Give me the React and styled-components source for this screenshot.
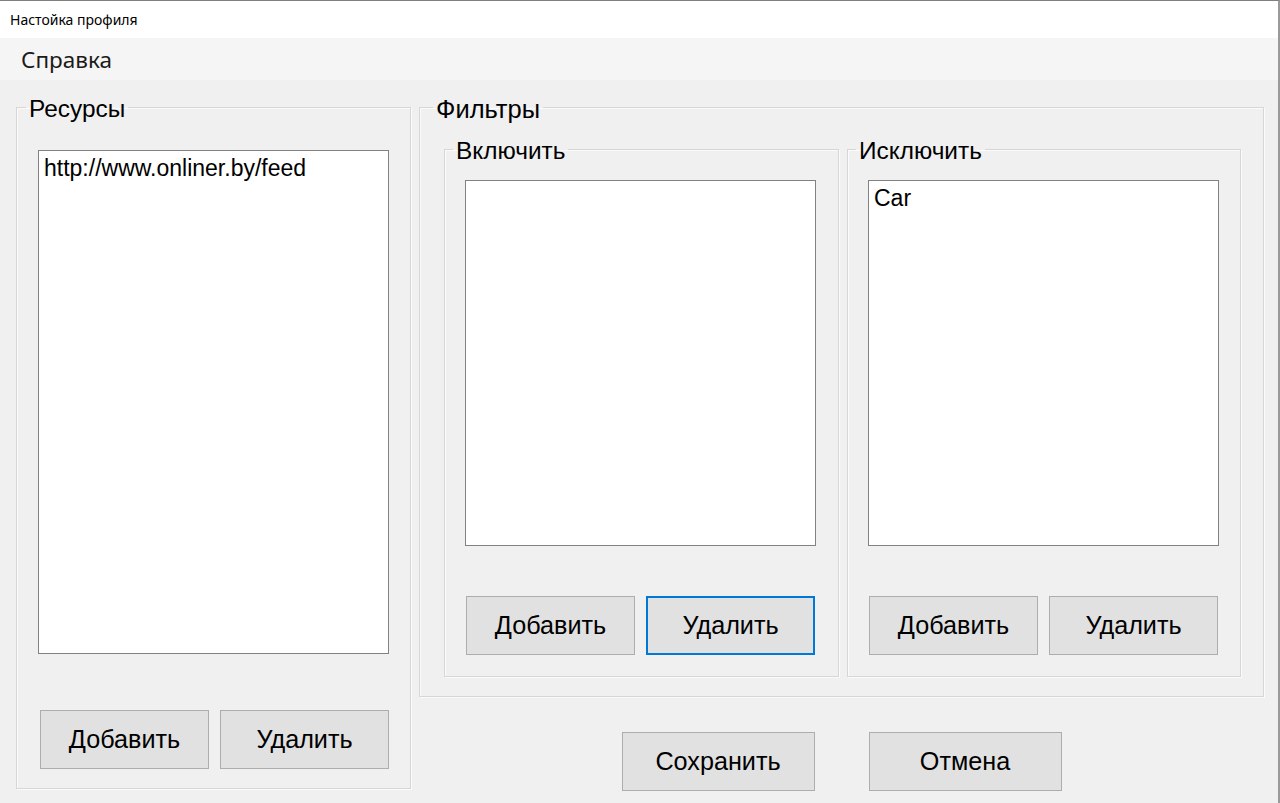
import React from "react";
import styled, { createGlobalStyle } from "styled-components";

const Global = createGlobalStyle`
  html, body { margin: 0; padding: 0; background: #f0f0f0; }
  * { box-sizing: border-box; }
`;

const Window = styled.div`
  width: 1280px;
  height: 803px;
  background: #f0f0f0;
  border-top: 1px solid #7f7f7f;
  border-right: 2px solid #9a9a9a;
  display: flex;
  flex-direction: column;
  font-family: "Liberation Sans", Arial, sans-serif;
  color: #000;
  overflow: hidden;
`;

const TitleBar = styled.div`
  height: 37px;
  background: #fff;
  display: flex;
  align-items: center;
  padding-left: 10px;
  font-family: "Noto Sans", "Open Sans", sans-serif;
  font-size: 14px;
  color: #000;
`;

const MenuBar = styled.div`
  height: 42px;
  background: #f5f5f5;
  display: flex;
  align-items: center;
  padding-left: 21px;
`;

const MenuItem = styled.span`
  font-family: "Noto Sans", "Open Sans", sans-serif;
  font-size: 22.5px;
  color: #1a1a1a;
`;

const Content = styled.div`
  display: flex;
  align-items: flex-start;
  gap: 8px;
  padding: 12px 0 0 16px;
`;

const Group = styled.fieldset`
  margin: 0;
  padding: 0;
  min-width: 0;
  width: ${(p) => p.$w}px;
  border: 1px solid #d6d6d6;
  box-shadow: inset 1px 1px 0 #fbfbfb, 1px 1px 0 #fbfbfb;
`;

const Legend = styled.legend`
  margin-left: ${(p) => p.$ml}px;
  padding: 4px 3px 0;
  font-size: ${(p) => p.$fs || 24.4}px;
  line-height: 26px;
  color: #000;
`;

const GroupBody = styled.div`
  display: flex;
  flex-direction: column;
  align-items: flex-start;
  padding: ${(p) => p.$pad};
`;

const ListBox = styled.div`
  width: 351px;
  height: ${(p) => p.$h}px;
  background: #fff;
  border: 1px solid #828282;
  padding: 4px 5px;
  font-size: 23px;
  line-height: 26px;
`;

const ButtonRow = styled.div`
  display: flex;
  gap: 11px;
  margin-top: ${(p) => p.$mt}px;
  margin-left: ${(p) => p.$ml}px;
`;

const Button = styled.button`
  width: ${(p) => p.$w || 169}px;
  height: 59px;
  margin: 0;
  padding: 0;
  background: #e1e1e1;
  border: ${(p) => (p.$focused ? "2px solid #0078d7" : "1px solid #adadad")};
  font-family: "Liberation Sans", Arial, sans-serif;
  font-size: 25.2px;
  color: #000;
  cursor: default;
`;

const RightColumn = styled.div`
  display: flex;
  flex-direction: column;
  align-items: center;
`;

const SubGroups = styled.div`
  display: flex;
  gap: 8px;
  padding: 12px 22px 19px 24px;
`;

const BottomRow = styled.div`
  display: flex;
  gap: 54px;
  margin-top: 35px;
`;

export default function App() {
  return (
    <>
      <Global />
      <Window>
        <TitleBar>Настойка профиля</TitleBar>
        <MenuBar>
          <MenuItem>Справка</MenuItem>
        </MenuBar>
        <Content>
          <Group $w={395}>
            <Legend $ml={9}>Ресурсы</Legend>
            <GroupBody $pad="28px 21px 19px 21px">
              <ListBox $h={504}>http://www.onliner.by/feed</ListBox>
              <ButtonRow $mt={56} $ml={2}>
                <Button>Добавить</Button>
                <Button>Удалить</Button>
              </ButtonRow>
            </GroupBody>
          </Group>
          <RightColumn>
            <Group $w={845}>
              <Legend $ml={13} $fs={25.5}>Фильтры</Legend>
              <SubGroups>
                <Group $w={395}>
                  <Legend $ml={8}>Включить</Legend>
                  <GroupBody $pad="16px 20px 21px 20px">
                    <ListBox $h={366} />
                    <ButtonRow $mt={50} $ml={1}>
                      <Button>Добавить</Button>
                      <Button $focused>Удалить</Button>
                    </ButtonRow>
                  </GroupBody>
                </Group>
                <Group $w={394}>
                  <Legend $ml={8}>Исключить</Legend>
                  <GroupBody $pad="16px 20px 21px 20px">
                    <ListBox $h={366}>Car</ListBox>
                    <ButtonRow $mt={50} $ml={1}>
                      <Button>Добавить</Button>
                      <Button>Удалить</Button>
                    </ButtonRow>
                  </GroupBody>
                </Group>
              </SubGroups>
            </Group>
            <BottomRow>
              <Button $w={193}>Сохранить</Button>
              <Button $w={193}>Отмена</Button>
            </BottomRow>
          </RightColumn>
        </Content>
      </Window>
    </>
  );
}
